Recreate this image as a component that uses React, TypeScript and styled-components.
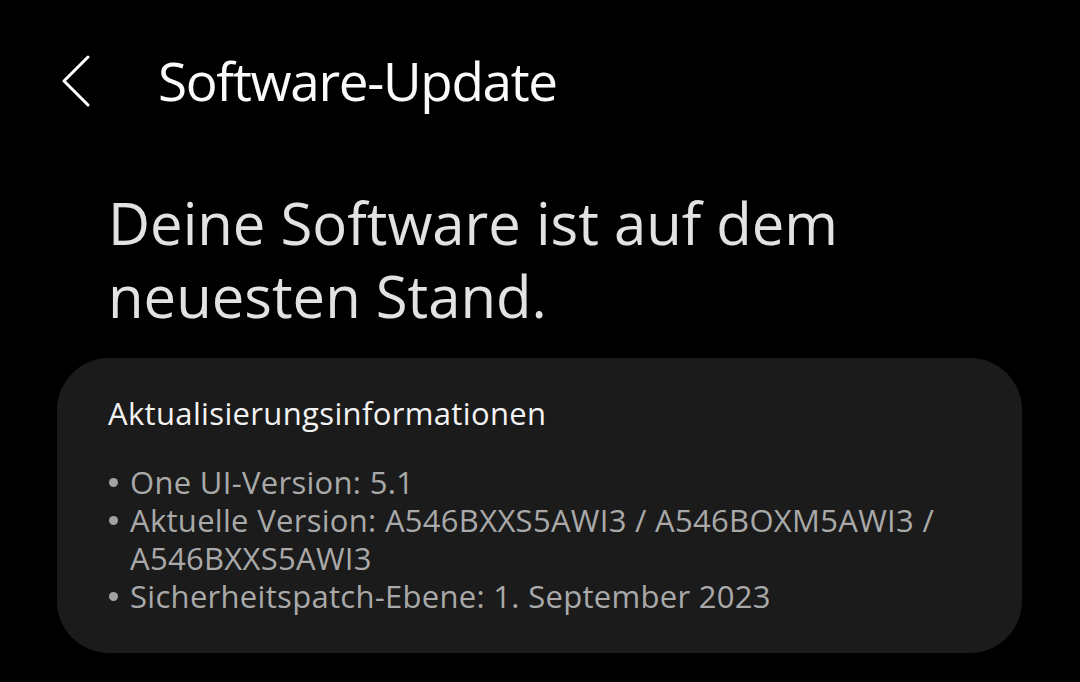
import React from "react";
import styled, { createGlobalStyle } from "styled-components";

const Global = createGlobalStyle`
  html, body { margin: 0; padding: 0; background: #000; }
  body { font-family: "Open Sans", Roboto, sans-serif; -webkit-font-smoothing: antialiased; }
`;

const Page = styled.div`
  width: 1080px;
  height: 682px;
  background: #000;
  overflow: hidden;
  display: flex;
  flex-direction: column;
`;

const Header = styled.header`
  display: flex;
  align-items: center;
  height: 72px;
  margin-top: 45px;
  padding-left: 60px;
`;

const BackButton = styled.button`
  background: none;
  border: none;
  padding: 0;
  width: 32px;
  height: 56px;
  display: flex;
  align-items: center;
  justify-content: center;
  color: #fff;
  margin-right: 66px;
`;

const Title = styled.h1`
  margin: 0;
  font-size: 53px;
  line-height: 72px;
  font-weight: 400;
  letter-spacing: -1.3px;
  color: #fafafa;
`;

const Status = styled.h2`
  margin: 69px 0 0 108px;
  font-size: 58px;
  line-height: 73px;
  font-weight: 400;
  color: #e2e2e2;
`;

const Card = styled.section`
  margin: 26px 58px 0 57px;
  background: #1b1b1b;
  border-radius: 52px;
  padding: 35px 50px 38px 51px;
`;

const CardTitle = styled.h3`
  margin: 0 0 30px;
  font-size: 31px;
  line-height: 40px;
  font-weight: 400;
  letter-spacing: 0.35px;
  color: #f2f2f2;
`;

const List = styled.ul`
  margin: 0;
  padding: 0;
  list-style: none;
`;

const Item = styled.li`
  position: relative;
  padding-left: 22px;
  font-size: 31px;
  line-height: 38px;
  letter-spacing: 0.3px;
  color: #a9a9a9;
  &::before {
    content: "";
    position: absolute;
    left: 1px;
    top: 15px;
    width: 9px;
    height: 9px;
    border-radius: 50%;
    background: #a2a2a2;
  }
`;

export default function App() {
  return (
    <Page>
      <Global />
      <Header>
        <BackButton aria-label="Zurück">
          <svg width="30" height="52" viewBox="0 0 30 52" fill="none">
            <path d="M27 2 L3 26 L27 50" stroke="#fff" strokeWidth="3" strokeLinecap="round" strokeLinejoin="round" />
          </svg>
        </BackButton>
        <Title>Software-Update</Title>
      </Header>
      <Status>
        Deine Software ist auf dem
        <br />
        neuesten Stand.
      </Status>
      <Card>
        <CardTitle>Aktualisierungsinformationen</CardTitle>
        <List>
          <Item>One UI-Version: 5.1</Item>
          <Item>Aktuelle Version: A546BXXS5AWI3 / A546BOXM5AWI3 / A546BXXS5AWI3</Item>
          <Item>Sicherheitspatch-Ebene: 1. September 2023</Item>
        </List>
      </Card>
    </Page>
  );
}
